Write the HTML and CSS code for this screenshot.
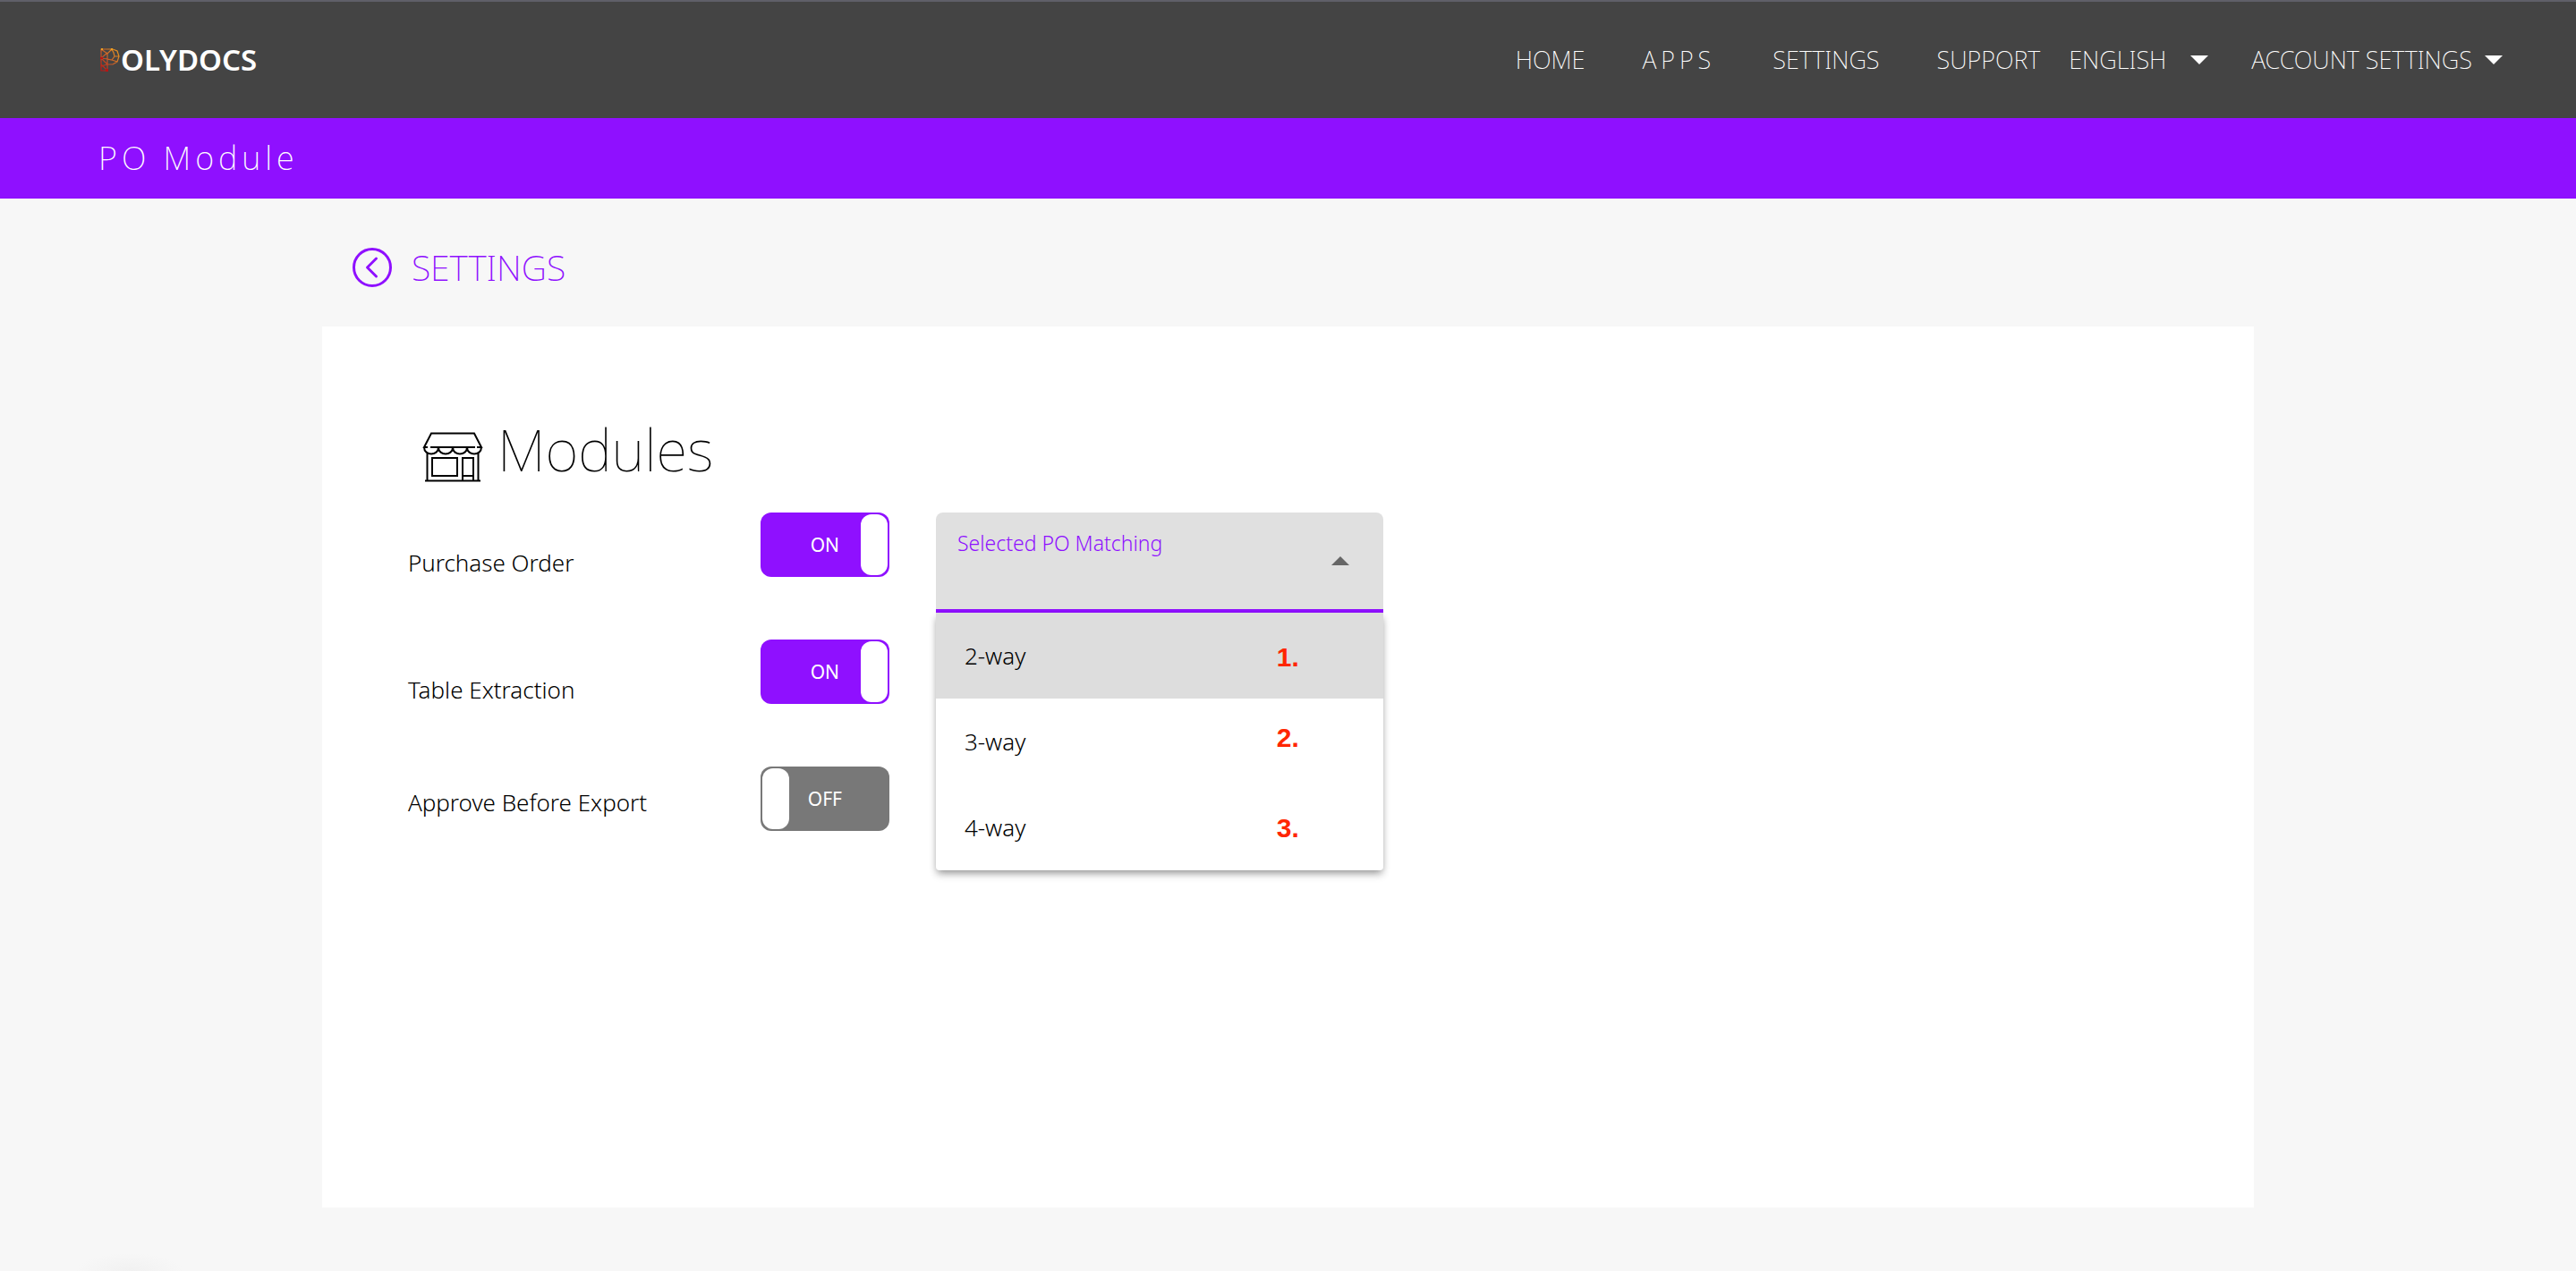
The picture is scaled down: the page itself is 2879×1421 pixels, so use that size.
FILE: index.html
```
<!DOCTYPE html>
<html lang="en">
<head>
<meta charset="utf-8">
<meta name="viewport" content="width=device-width, initial-scale=1">
<title>Polydocs – PO Module</title>
<link rel="stylesheet" href="styles.css">
</head>
<body>
<header class="topbar">
  <a class="logo" href="#" aria-label="Polydocs">
    <svg class="logo-mark" viewBox="0 0 22 26" aria-hidden="true">
      <defs>
        <linearGradient id="ember" x1="0" y1="1" x2="1" y2="0">
          <stop offset="0" stop-color="#b81414"/>
          <stop offset="0.45" stop-color="#c85a28"/>
          <stop offset="1" stop-color="#f0a020"/>
        </linearGradient>
      </defs>
      <path fill="none" stroke="url(#ember)" stroke-width="1.2" d="M1 1H14L19 3L21 9L19 15L14 18H8V25H1ZM1 1L8 6L13 1L15 5L16 9H21M1 11L8 5M16 9L13 13L8 12L8 6M13 13L19 15M1 11L8 12V18L1 11M8 18L1 20M1 18L8 25"/>
      <path fill="#f0a020" d="M1 0h2v2H1zM12 0h2v2h-2z"/>
      <path fill="#b81414" d="M6 23h3v3H6zM0 10h3v2H0z"/>
    </svg>
    <span>OLYDOCS</span>
  </a>
  <nav class="nav" aria-label="Main">
    <a href="#">HOME</a>
    <a class="spaced" href="#">APPS</a>
    <a href="#">SETTINGS</a>
    <a href="#">SUPPORT</a>
    <span class="language">
      <select aria-label="Language"><option>ENGLISH</option></select>
      <svg class="caret" viewBox="0 0 20 10" aria-hidden="true"><path d="M0 0H20L10 10Z"/></svg>
    </span>
    <button class="account" type="button">ACCOUNT SETTINGS
      <svg class="caret" viewBox="0 0 20 10" aria-hidden="true"><path d="M0 0H20L10 10Z"/></svg>
    </button>
  </nav>
</header>
<div class="module-bar">PO Module</div>

<main class="page">
  <a class="back" href="#">
    <svg viewBox="0 0 44 44" aria-hidden="true"><circle cx="22" cy="22" r="20.5"/><path d="M26.500 12L16.500 22L26.500 32"/></svg>
    <span>SETTINGS</span>
  </a>

  <section class="card">
    <h1 class="title">
      <svg viewBox="0 0 68 56" aria-hidden="true">
        <path d="M6 17H2L10 1.500H58L66 17H61M9 17H59M5.500 24V54M62.500 24V54M3 54.500H65M11 29H39V49H11ZM45 54V29H57V54M45 49H57"/>
        <path d="M2 17C2 27 18 27 18 17C18 27 34 27 34 17C34 27 50 27 50 17C50 27 66 27 66 17"/>
      </svg>
      Modules
    </h1>
    <div class="settings">
      <div class="row">
        <label class="name" for="purchase-order">Purchase Order</label>
        <span class="toggle"><input id="purchase-order" type="checkbox" role="switch" checked><span class="state" aria-hidden="true">ON</span></span>
        <div class="matching">
          <label for="matching">Selected PO Matching</label>
          <select id="matching"><option value=""></option><option>2-way</option><option>3-way</option><option>4-way</option></select>
          <svg class="arrow" viewBox="0 0 20 10" aria-hidden="true"><path d="M0 10H20L10 0Z"/></svg>
          <div class="panel">
            <ul class="options">
              <li class="active">2-way</li>
              <li>3-way</li>
              <li>4-way</li>
            </ul>
            <span class="mark mark-1">1.</span>
            <span class="mark mark-2">2.</span>
            <span class="mark mark-3">3.</span>
          </div>
        </div>
      </div>
      <div class="row">
        <label class="name" for="table-extraction">Table Extraction</label>
        <span class="toggle"><input id="table-extraction" type="checkbox" role="switch" checked><span class="state" aria-hidden="true">ON</span></span>
      </div>
      <div class="row row-tight">
        <label class="name" for="approve">Approve Before Export</label>
        <span class="toggle"><input id="approve" type="checkbox" role="switch"><span class="state" aria-hidden="true">OFF</span></span>
      </div>
    </div>
  </section>
</main>
</body>
</html>
```
FILE: styles.css
```
:root {
  --purple: #8f10ff;
  --font: "Noto Sans", "Open Sans", sans-serif;
}

* {
  box-sizing: border-box;
}

body {
  margin: 0;
  min-height: 100vh;
  background: radial-gradient(60px 20px at 145px 100%, #f1f1f1, #f7f7f7) #f7f7f7;
  color: #000;
  font-family: var(--font);
  font-size: 26px;
  font-weight: 300;
  line-height: 36px;
}

a {
  color: inherit;
  text-decoration: none;
}

button,
select {
  margin: 0;
  padding: 0;
  border: 0;
  background: none;
  color: inherit;
  font: inherit;
  appearance: none;
}

/* Top bar */
.topbar {
  display: flex;
  align-items: center;
  justify-content: space-between;
  height: 132px;
  padding: 0 82px 0 112px;
  border-top: 2px solid #5f5f68;
  background: #444;
  color: #fff;
}

.logo {
  display: flex;
  align-items: center;
  gap: 1px;
  font-size: 33px;
  font-weight: 600;
}

.logo-mark {
  width: 22px;
  height: 26px;
}

.nav {
  display: flex;
  align-items: center;
  gap: 64px;
  font-size: 27px;
  font-weight: 200;
}

.spaced {
  letter-spacing: 5px;
}

.language,
.account {
  display: flex;
  align-items: center;
}

.language {
  gap: 26px;
  margin: 0 -16px 0 -32px;
}

.account {
  gap: 14px;
}

.caret {
  width: 20px;
  height: 10px;
  fill: #fff;
}

.module-bar {
  padding: 20px 110px;
  background: var(--purple);
  color: #fff;
  font-size: 36px;
  font-weight: 200;
  line-height: 50px;
  letter-spacing: 5px;
}

/* Page */
.page {
  width: 75%;
  margin: 0 auto;
  padding-bottom: 70px;
}

.back {
  display: inline-flex;
  align-items: center;
  gap: 22px;
  margin: 50px 0 39px 34px;
  color: var(--purple);
  font-size: 39px;
  font-weight: 250;
  line-height: 54px;
}

.back svg {
  width: 44px;
  height: 44px;
  fill: none;
  stroke: var(--purple);
  stroke-width: 3;
  stroke-linecap: round;
  stroke-linejoin: round;
}

.card {
  min-height: 985px;
  padding: 96px;
  background: #fff;
}

.title {
  display: flex;
  align-items: center;
  gap: 16px;
  margin: 0 0 28px 16px;
  font-size: 64px;
  font-weight: 100;
  line-height: 84px;
}

.title svg {
  width: 68px;
  height: 56px;
  margin-top: 16px;
  fill: none;
  stroke: #000;
  stroke-width: 2;
}

.settings {
  display: flex;
  flex-direction: column;
  gap: 70px;
}

.row {
  display: flex;
  align-items: flex-start;
  height: 72px;
}

.name {
  width: 394px;
  padding-top: 38px;
}

.row-tight .name {
  padding-top: 22px;
}

/* Toggle */
.toggle {
  display: grid;
  width: 144px;
  height: 72px;
}

.toggle input,
.state {
  grid-area: 1 / 1;
}

.toggle input {
  display: flex;
  width: 100%;
  height: 100%;
  margin: 0;
  padding: 2px;
  border-radius: 12px;
  background: #787878;
  appearance: none;
}

.toggle input::before {
  content: "";
  width: 30px;
  border-radius: 12px;
  background: #fff;
}

.toggle input:checked {
  justify-content: flex-end;
  background: var(--purple);
}

.state {
  place-self: center;
  color: #fff;
  font-size: 21px;
  font-weight: 400;
  line-height: 28px;
  pointer-events: none;
}

/* Matching drop-down */
.matching {
  position: relative;
  display: grid;
  width: 500px;
  height: 112px;
  margin-left: 52px;
  border-bottom: 4px solid var(--purple);
  border-radius: 8px 8px 0 0;
  background: #e0e0e0;
}

.matching label,
.matching select,
.arrow {
  grid-area: 1 / 1;
}

.matching label {
  padding: 18px 24px;
  color: var(--purple);
  font-size: 23px;
  line-height: 32px;
}

.matching select {
  width: 100%;
  height: 100%;
}

.arrow {
  place-self: center end;
  width: 20px;
  height: 10px;
  margin-right: 38px;
  fill: #666;
}

.panel {
  position: absolute;
  top: 112px;
  left: 0;
  width: 100%;
  border-radius: 0 0 4px 4px;
  background: #fff;
  box-shadow: 0 4px 8px -2px rgba(0, 0, 0, 0.4), 0 6px 10px rgba(0, 0, 0, 0.1);
}

.options {
  margin: 0;
  padding: 0;
  list-style: none;
}

.options li {
  padding: 30px 32px;
}

.options .active {
  background: #ddd;
}

/* Numbered callouts over the list */
.mark {
  position: absolute;
  right: 94px;
  color: #ff2600;
  font: bold 30px/32px "Liberation Sans", Arial, sans-serif;
}

.mark-1 { top: 34px; }
.mark-2 { top: 124px; }
.mark-3 { top: 225px; }
```
